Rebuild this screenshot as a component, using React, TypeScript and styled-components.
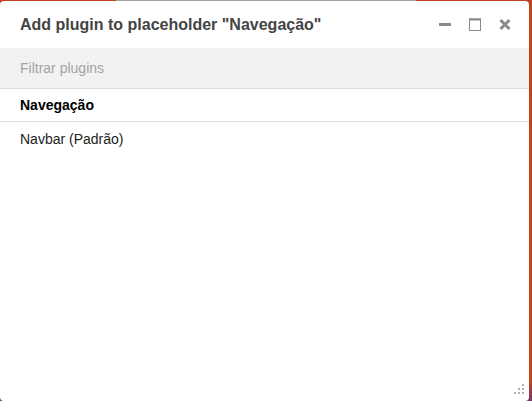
import styled, { createGlobalStyle } from 'styled-components'

const GlobalStyle = createGlobalStyle`
html, body {
  margin: 0;
  padding: 0;
}
body {
  width: 532px;
  height: 401px;
  overflow: hidden;
  font-family: "Liberation Sans", Arial, sans-serif;
  background: linear-gradient(to bottom, #c2421f 0%, #c2421f 95%, #7b3768 100%);
}
`

const Desktop = styled.div`
width: 532px;
height: 401px;
display: flex;
flex-direction: column;
`

const TopEdge = styled.div`
height: 1px;
display: flex;
`

const EdgePart = styled.div<{ $w: number; $grey?: boolean }>`
width: ${p => p.$w}px;
background: ${p => (p.$grey ? '#a3a3a3' : '#c2421f')};
`

const Dialog = styled.div`
width: 529px;
height: 400px;
background: #fff;
border-radius: 4px;
display: flex;
flex-direction: column;
overflow: hidden;
`

const Header = styled.div`
height: 47px;
display: flex;
align-items: center;
padding: 0 18px 0 20px;
box-sizing: border-box;
`

const Title = styled.h1`
margin: 0;
flex: 1;
font-size: 16px;
font-weight: bold;
color: #444;
`

const Controls = styled.div`
display: flex;
gap: 18px;
align-items: center;
`

const ControlButton = styled.button`
width: 12px;
height: 13px;
padding: 0;
border: 0;
background: none;
display: flex;
align-items: center;
justify-content: center;
cursor: pointer;
`

const FilterBar = styled.div`
height: 40px;
background: #f2f2f2;
border-bottom: 1px solid #ddd;
display: flex;
align-items: center;
padding: 0 20px;
`

const FilterInput = styled.input`
flex: 1;
border: 0;
background: transparent;
font-family: inherit;
font-size: 14px;
color: #333;
outline: none;
padding: 0;
&::placeholder {
  color: #a3a3a3;
}
`

const Group = styled.div`
height: 32px;
display: flex;
align-items: center;
padding: 0 20px;
font-size: 14px;
font-weight: bold;
color: #000;
border-bottom: 1px solid #ddd;
`

const Item = styled.div`
height: 34px;
display: flex;
align-items: center;
padding: 0 20px;
font-size: 14px;
color: #222;
`

const Body = styled.div`
flex: 1;
display: flex;
flex-direction: column;
`

const Footer = styled.div`
display: flex;
justify-content: flex-end;
padding: 0 4px 6px 0;
`

const App = () => {
  return (
    <>
      <GlobalStyle />
      <Desktop>
        <TopEdge>
          <EdgePart $w={116} />
          <EdgePart $w={300} $grey />
          <EdgePart $w={116} />
        </TopEdge>
        <Dialog>
          <Header>
            <Title>Add plugin to placeholder "Navegação"</Title>
            <Controls>
              <ControlButton title="Minimizar">
                <svg width="12" height="13" viewBox="0 0 12 13">
                  <rect x="0" y="5" width="12" height="3" fill="#8a8a8a" />
                </svg>
              </ControlButton>
              <ControlButton title="Maximizar">
                <svg width="12" height="13" viewBox="0 0 12 13">
                  <rect x="0.5" y="1" width="11" height="11.5" fill="none" stroke="#8a8a8a" strokeWidth="1" />
                  <rect x="0" y="0.5" width="12" height="2" fill="#8a8a8a" />
                </svg>
              </ControlButton>
              <ControlButton title="Fechar">
                <svg width="12" height="13" viewBox="0 0 12 13">
                  <path d="M1.5 2 L10.5 11 M10.5 2 L1.5 11" stroke="#8a8a8a" strokeWidth="3" />
                </svg>
              </ControlButton>
            </Controls>
          </Header>
          <Body>
            <FilterBar>
              <FilterInput placeholder="Filtrar plugins" />
            </FilterBar>
            <Group>Navegação</Group>
            <Item>Navbar (Padrão)</Item>
          </Body>
          <Footer>
            <svg width="12" height="12" viewBox="0 0 12 12">
              <g fill="#b0b0b0">
                <rect x="9" y="1" width="2" height="2" />
                <rect x="5" y="5" width="2" height="2" />
                <rect x="9" y="5" width="2" height="2" />
                <rect x="1" y="9" width="2" height="2" />
                <rect x="5" y="9" width="2" height="2" />
                <rect x="9" y="9" width="2" height="2" />
              </g>
            </svg>
          </Footer>
        </Dialog>
      </Desktop>
    </>
  )
}

export default App
